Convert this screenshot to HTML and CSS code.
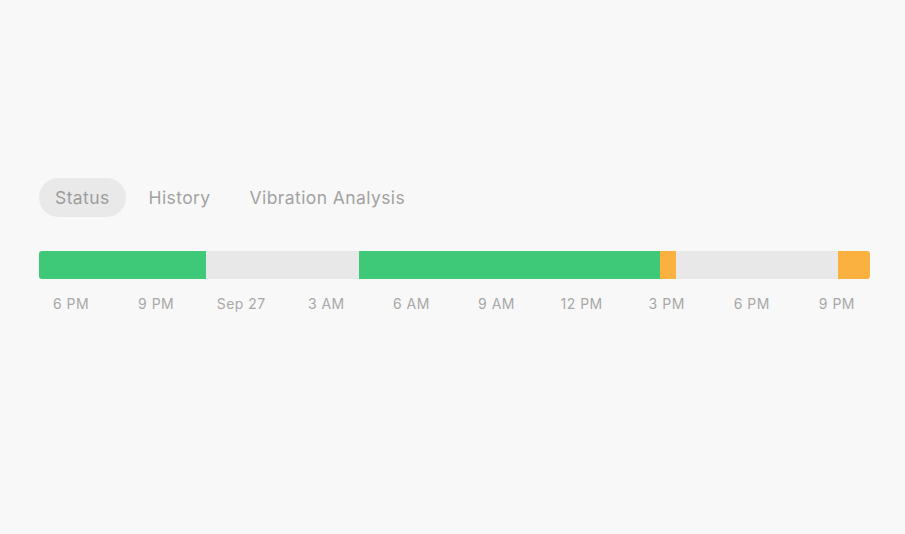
FILE: index.html
```html
<!DOCTYPE html>
<html>
<head>
<meta charset="utf-8">
<link rel="stylesheet" href="styles.css">
</head>
<body>
<div class="page">
  <nav class="tabs">
    <span class="tab active">Status</span>
    <span class="tab">History</span>
    <span class="tab">Vibration Analysis</span>
  </nav>
  <div class="bar">
    <div class="seg ok" style="width:167px"></div>
    <div class="seg off" style="width:153px"></div>
    <div class="seg ok" style="width:301px"></div>
    <div class="seg warn" style="width:16px"></div>
    <div class="seg off" style="width:162px"></div>
    <div class="seg warn" style="width:32px"></div>
  </div>
  <div class="labels">
    <span>6 PM</span><span>9 PM</span><span>Sep 27</span><span>3 AM</span><span>6 AM</span>
    <span>9 AM</span><span>12 PM</span><span>3 PM</span><span>6 PM</span><span>9 PM</span>
  </div>
</div>
</body>
</html>
```

FILE: styles.css
```css
html, body {
  margin: 0;
  background: #f8f8f8;
}
body {
  font-family: Inter, "Liberation Sans", sans-serif;
  color: #a2a2a2;
}
.page {
  padding: 178px 0 0 39px;
}
.tabs {
  display: flex;
  align-items: center;
  height: 39px;
}
.tab {
  font-size: 17.5px;
  letter-spacing: 0.4px;
  padding: 0 16px;
  height: 39px;
  line-height: 40px;
  border-radius: 20px;
  margin-right: 7px;
}
.tab.active {
  background: #e9e9e9;
  color: #9c9c9c;
}
.bar {
  display: flex;
  margin-top: 34px;
  width: 831px;
  height: 28px;
  border-radius: 3px;
  overflow: hidden;
}
.seg { height: 100%; }
.ok { background: #3ec978; }
.off { background: #e8e8e8; }
.warn { background: #fbb13f; }
.labels {
  display: grid;
  grid-template-columns: repeat(10, 85.1px);
  margin-left: -10.5px;
  margin-top: 15px;
  font-size: 14px;
  letter-spacing: 0.5px;
  line-height: 20px;
  color: #a8a8a8;
}
.labels span { text-align: center; }
```
